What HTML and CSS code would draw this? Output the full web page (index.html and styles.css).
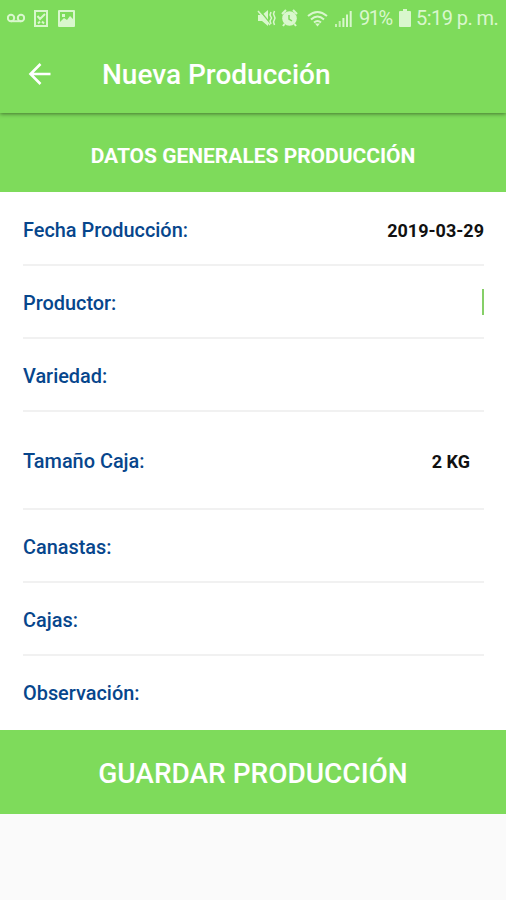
FILE: index.html
```
<!DOCTYPE html>
<html lang="es">
<head>
<meta charset="UTF-8"><meta name="viewport" content="width=device-width,initial-scale=1">
<title>Nueva Producción</title>
<link rel="stylesheet" href="styles.css">
</head>
<body>
<div class="status">
  <svg class="voicemail" width="18" height="10" viewBox="0 0 18 10"><path d="M4 8.2h10" /><circle cx="4" cy="5" r="3.2"/><circle cx="14" cy="5" r="3.2"/></svg>
  <svg class="task" width="14" height="17" viewBox="0 0 14 17"><path d="M1 1h12v15H1zM3.5 6l2.500 3 5-5M4 13.500l2-2m4 2l-2-2"/></svg>
  <svg class="photo" width="17" height="17" viewBox="0 0 17 17"><path fill-rule="evenodd" d="M1 0h15a1 1 0 0 1 1 1v15a1 1 0 0 1-1 1H1a1 1 0 0 1-1-1V1a1 1 0 0 1 1-1zM2 2v10l4-4 3 2 3-4 3 3V2zM4 4h3v3H4z"/></svg>
  <span class="space"></span>
  <svg class="mute" width="19" height="18" viewBox="0 0 19 18"><path class="fill" d="M1 6h4l6-5v16l-6-5H1z"/><path class="slash" d="M2.500 1l11 14"/><path d="M1 2l12 14"/><path d="M14 3l-1 3 1.500 3-1.500 3 1 3M17.500 2l-1 3 1.500 4-1.500 4 1 3"/></svg>
  <svg class="alarm" width="17" height="18" viewBox="0 0 17 18"><circle class="fill" cx="8.5" cy="9.5" r="7.300"/><path d="M1 5l4-4M16 5l-4-4M3.5 15L2 17M13.5 15l1.500 2"/><path class="hand" d="M8 6v4l3 2"/></svg>
  <svg class="wifi" width="21" height="17" viewBox="0 0 21 17"><path d="M1 6q9.500-8 19 0M4 9.500q6.500-6 13 0M7 12.500q3.500-3 7 0"/><path class="fill" d="M8 13.500h5l-2.500 3z"/></svg>
  <svg class="signal" width="17" height="17" viewBox="0 0 17 17"><path class="weak" d="M1 14v3M4.700 11v6"/><path d="M8.400 8v9M12 4.500V17M15.700 1v16"/></svg>
  <span class="percent">91%</span>
  <svg class="battery" width="12" height="18" viewBox="0 0 12 18"><path d="M4 0h4v2h3a1 1 0 0 1 1 1v14a1 1 0 0 1-1 1H1a1 1 0 0 1-1-1V3a1 1 0 0 1 1-1h3z"/></svg>
  <span class="time">5:19 p. m.</span>
</div>
<header>
  <svg class="back" width="24" height="24" viewBox="0 0 24 24"><path d="M22.500 12H2.500M12.500 2L2.500 12l10 10"/></svg>
  <h1>Nueva Producción</h1>
</header>
<main>
  <h2>DATOS GENERALES PRODUCCIÓN</h2>
  <div class="fields">
    <div class="row"><span>Fecha Producción:</span><b>2019-03-29</b></div>
    <div class="row"><span>Productor:</span><i class="cursor"></i></div>
    <div class="row"><span>Variedad:</span></div>
    <div class="row tall"><span>Tamaño Caja:</span><b>2 KG</b></div>
    <div class="row"><span>Canastas:</span></div>
    <div class="row"><span>Cajas:</span></div>
    <div class="row"><span>Observación:</span></div>
  </div>
  <button class="save">GUARDAR PRODUCCIÓN</button>
</main>
</body>
</html>
```

FILE: styles.css
```
:root{--green:#7edb5b;--pale:#d9f7cd;--blue:#07468c}
*{box-sizing:border-box}
body{margin:0;font-family:Roboto,sans-serif;background:#fafafa}
h1,h2{margin:0;color:#fff}
.status{position:relative;z-index:1;display:flex;align-items:center;height:36px;padding:0 8px 0 7px;background:var(--green);color:var(--pale);font-size:20px;white-space:nowrap}
.status svg{flex:none;fill:none;stroke:var(--pale);stroke-width:2}
.status .fill,.status .photo,.status .battery{fill:var(--pale);stroke:none}
.space{flex:1}
.task{margin-left:9px}
.photo{margin-left:10px}
.status .mute path{stroke-width:1.5}
.status .mute .slash,.status .alarm .hand{stroke:var(--green);stroke-width:1.5}
.alarm{margin-left:5px}
.wifi{margin-left:9px}
.signal{margin-left:7px}
.signal .weak{opacity:.8}
.percent{margin-left:7px;width:35px;letter-spacing:-1.5px}
.battery{margin-left:5px}
.time{margin-left:5px;width:82px;letter-spacing:-.55px}
header{position:relative;display:flex;align-items:center;height:77px;padding:0 0 2px 28px;background:var(--green);box-shadow:0 1px 4px #0007}
.back{fill:none;stroke:#fff;stroke-width:2.600}
h1{margin-left:50px;padding-top:2px;font-size:28px;font-weight:500}
h2{height:79px;line-height:87px;background:var(--green);font-size:21px;font-weight:700;letter-spacing:-.02px;text-align:center}
.fields{height:538px;padding:1px 22px 0 23px;background:#fff}
.row{display:flex;justify-content:space-between;align-items:center;height:73px;padding-top:3px;border-bottom:2px solid #f1f1f1;color:var(--blue);font-size:19.900px;font-weight:500}
.row:last-child{padding-top:1px;border:0}
.row b{color:#111;font-size:18px}
.tall{height:98px}
.tall b{margin-right:14px}
.cursor{width:2px;height:26px;margin-bottom:2px;background:#86cf68}
.save{display:block;width:100%;height:84px;padding:2px 0 0;border:0;background:var(--green);color:#fff;font:500 28px Roboto,sans-serif}
```
